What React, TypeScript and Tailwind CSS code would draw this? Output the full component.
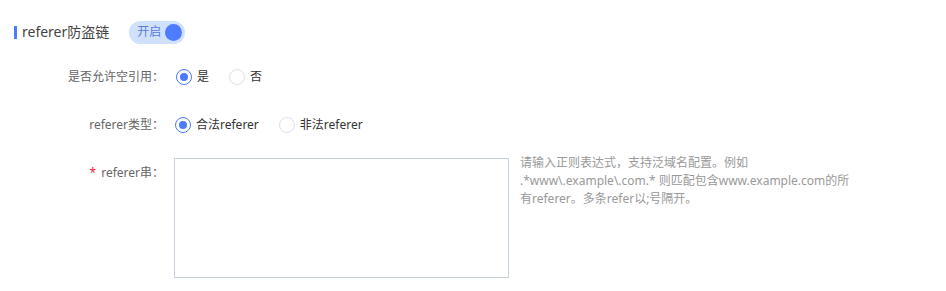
import React from "react";

const font = { fontFamily: '"Noto Sans", "Noto Sans CJK SC", sans-serif' };

function Radio({ checked, label }: { checked: boolean; label: string }) {
  return (
    <label className="flex items-center mr-[20px] cursor-pointer">
      <span
        className={
          checked
            ? "w-[16px] h-[16px] rounded-full border border-[#4b7bfb] bg-white flex items-center justify-center"
            : "w-[16px] h-[16px] rounded-full border border-[#dcdfe6] bg-white flex items-center justify-center"
        }
      >
        {checked && <span className="w-[8px] h-[8px] rounded-full bg-[#4b7bfb]" />}
      </span>
      <span className="ml-[5px] text-[12px] leading-[18px] text-[#333]">{label}</span>
    </label>
  );
}

export default function App() {
  return (
    <div className="w-[946px] h-[291px] bg-white" style={font}>
      <div className="pt-[21px] pl-[14px] flex items-center h-[43px] box-border">
        <span className="w-[3px] h-[13px] bg-[#4b7bff]" />
        <span className="ml-[5px] text-[14px] leading-[22px] text-[#444]">referer防盗链</span>
        <span className="ml-[20px] w-[56px] h-[23px] rounded-full bg-[#cfe1fd] flex items-center pl-[8px] pr-[3px] justify-between">
          <span className="text-[12px] leading-[18px] text-[#5b7be0]">开启</span>
          <span className="w-[17px] h-[17px] rounded-full bg-[#4d7cfe]" />
        </span>
      </div>

      <div className="mt-[18px] flex items-center h-[32px]">
        <div className="w-[164px] text-right text-[12px] leading-[18px] text-[#666]">是否允许空引用：</div>
        <div className="ml-[12px] flex items-center">
          <Radio checked label="是" />
          <Radio checked={false} label="否" />
        </div>
      </div>

      <div className="mt-[16px] flex items-center h-[32px]">
        <div className="w-[164px] text-right text-[12px] leading-[18px] text-[#666]">referer类型：</div>
        <div className="ml-[11px] flex items-center">
          <Radio checked label="合法referer" />
          <Radio checked={false} label="非法referer" />
        </div>
      </div>

      <div className="mt-[13px] flex items-start">
        <div className="w-[164px] pt-[10px] text-right text-[12px] leading-[18px] text-[#666]">
          <span className="text-[#f5222d] mr-[5px]">*</span>referer串：
        </div>
        <textarea className="ml-[10px] mt-[4px] w-[335px] h-[120px] border border-[#c5d1dc] outline-none resize-none bg-white" />
        <div className="ml-[11px] text-[12px] leading-[18px] text-[#999]">
          <div>请输入正则表达式，支持泛域名配置。例如</div>
          <div>.*www\.example\.com.* 则匹配包含www.example.com的所</div>
          <div>有referer。多条refer以;号隔开。</div>
        </div>
      </div>
    </div>
  );
}
